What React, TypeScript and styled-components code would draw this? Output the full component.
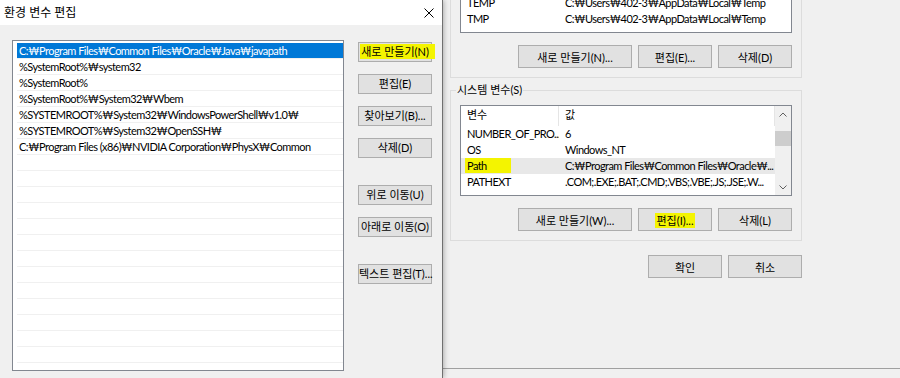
import React from 'react';
import styled, { createGlobalStyle } from 'styled-components';

const paths = [
  'C:₩Program Files₩Common Files₩Oracle₩Java₩javapath',
  '%SystemRoot%₩system32',
  '%SystemRoot%',
  '%SystemRoot%₩System32₩Wbem',
  '%SYSTEMROOT%₩System32₩WindowsPowerShell₩v1.0₩',
  '%SYSTEMROOT%₩System32₩OpenSSH₩',
  'C:₩Program Files (x86)₩NVIDIA Corporation₩PhysX₩Common',
];

const userVars = [
  { name: 'TEMP', value: 'C:₩Users₩402-3₩AppData₩Local₩Temp' },
  { name: 'TMP', value: 'C:₩Users₩402-3₩AppData₩Local₩Temp' },
];

const systemVars = [
  { name: 'NUMBER_OF_PRO...', value: '6' },
  { name: 'OS', value: 'Windows_NT' },
  { name: 'Path', value: 'C:₩Program Files₩Common Files₩Oracle₩...', marked: true },
  { name: 'PATHEXT', value: '.COM;.EXE;.BAT;.CMD;.VBS;.VBE;.JS;.JSE;.W...' },
];

const EMPTY_ROWS = 14;

const App = () => {
  return (
    <>
      <GlobalStyle />
      <Screen>
        <FrontDialog>
          <TitleBar>
            <span>환경 변수 편집</span>
            <svg width="10" height="10" viewBox="0 0 10 10">
              <path d="M0.5 0.5 L9.5 9.5 M9.5 0.5 L0.5 9.5" stroke="#000" strokeWidth="1" />
            </svg>
          </TitleBar>
          <DialogBody>
            <PathList>
              {paths.map((p, i) => (
                <PathRow key={p} $selected={i === 0}>{p}</PathRow>
              ))}
              {Array.from({ length: EMPTY_ROWS }).map((_, i) => (
                <PathRow key={'e' + i} />
              ))}
            </PathList>
            <ButtonColumn>
              <ButtonStack>
                <SideButton><Marker $left={1} $right={6}>새로 만들기(N)</Marker></SideButton>
                <SideButton>편집(E)</SideButton>
                <SideButton>찾아보기(B)...</SideButton>
                <SideButton>삭제(D)</SideButton>
              </ButtonStack>
              <ButtonStack>
                <SideButton>위로 이동(U)</SideButton>
                <SideButton>아래로 이동(O)</SideButton>
              </ButtonStack>
              <ButtonStack>
                <SideButton>텍스트 편집(T)...</SideButton>
              </ButtonStack>
            </ButtonColumn>
          </DialogBody>
        </FrontDialog>

        <BackDialog>
          <BackContent>
            <UserGroup>
              <UserList>
                {userVars.map((v) => (
                  <VarRow key={v.name}>
                    <NameCell>{v.name}</NameCell>
                    <ValueCell>{v.value}</ValueCell>
                  </VarRow>
                ))}
              </UserList>
              <ButtonRow>
                <BackButton $width={114}>새로 만들기(N)...</BackButton>
                <BackButton $width={74}>편집(E)...</BackButton>
                <BackButton $width={74}>삭제(D)</BackButton>
              </ButtonRow>
            </UserGroup>

            <SystemGroup>
              <GroupLegend>시스템 변수(S)</GroupLegend>
              <SystemList>
                <Table>
                  <HeaderRow>
                    <HeaderCell $width={98}>변수</HeaderCell>
                    <HeaderCell>값</HeaderCell>
                  </HeaderRow>
                  {systemVars.map((v) => (
                    <VarRow key={v.name} $active={v.marked}>
                      <NameCell>
                        {v.marked ? <Marker $left={2} $right={24}>{v.name}</Marker> : v.name}
                      </NameCell>
                      <ValueCell>{v.value}</ValueCell>
                    </VarRow>
                  ))}
                </Table>
                <ScrollBar>
                  <ScrollArrow>
                    <svg width="8" height="5" viewBox="0 0 8 5">
                      <polyline points="0.5,4.5 4,1 7.5,4.5" fill="none" stroke="#606060" strokeWidth="1" />
                    </svg>
                  </ScrollArrow>
                  <ScrollTrack>
                    <ScrollThumb $offset={9} />
                  </ScrollTrack>
                  <ScrollArrow>
                    <svg width="8" height="5" viewBox="0 0 8 5">
                      <polyline points="0.5,0.5 4,4 7.5,0.5" fill="none" stroke="#606060" strokeWidth="1" />
                    </svg>
                  </ScrollArrow>
                </ScrollBar>
              </SystemList>
              <ButtonRow>
                <BackButton $width={114}>새로 만들기(W)...</BackButton>
                <BackButton $width={74}><Marker $left={2} $right={2}>편집(I)...</Marker></BackButton>
                <BackButton $width={74}>삭제(L)</BackButton>
              </ButtonRow>
            </SystemGroup>

            <FooterRow>
              <BackButton $width={74}>확인</BackButton>
              <BackButton $width={74}>취소</BackButton>
            </FooterRow>
          </BackContent>
        </BackDialog>
      </Screen>
    </>
  );
};

const uiFont = `"Lato", "Noto Sans CJK KR", sans-serif`;

const listText = `
  font-size: 11px;
  letter-spacing: -0.55px;
`;

const GlobalStyle = createGlobalStyle`
  html, body {
    margin: 0;
    padding: 0;
  }
  body {
    background: #f0f0f0;
    font-family: ${uiFont};
    font-size: 11px;
    color: #000;
  }
  #root {
    width: 900px;
    height: 378px;
    overflow: hidden;
  }
`;

const Screen = styled.div`
  display: flex;
  width: 900px;
  height: 378px;
  overflow: hidden;
  background: #f0f0f0;
`;

const FrontDialog = styled.section`
  position: relative;
  z-index: 1;
  flex: none;
  width: 442px;
  display: flex;
  flex-direction: column;
  background: #f0f0f0;
  border-right: 1px solid #707070;
  box-shadow: 1px 0 5px rgba(0, 0, 0, 0.28);
`;

const TitleBar = styled.div`
  height: 25px;
  flex: none;
  display: flex;
  align-items: center;
  justify-content: space-between;
  padding: 0 8px 0 4px;
  background: #fff;
  font-size: 12px;
  line-height: 16px;

  svg {
    display: block;
  }
`;

const DialogBody = styled.div`
  flex: 1;
  display: flex;
  gap: 14px;
  padding: 15px 0 0 12px;
  min-height: 0;
`;

const PathList = styled.div`
  flex: none;
  box-sizing: border-box;
  width: 332px;
  height: 331px;
  padding: 2px 0 0 4px;
  background: #fff;
  border: 1px solid #828790;
  overflow: hidden;
  ${listText}
`;

const PathRow = styled.div<{ $selected?: boolean }>`
  box-sizing: border-box;
  height: 16px;
  padding-left: 2px;
  line-height: 15px;
  white-space: nowrap;
  border-bottom: 1px solid #f0f0f0;
  background: ${(p) => (p.$selected ? '#0078d7' : 'transparent')};
  color: ${(p) => (p.$selected ? '#fff' : '#000')};
`;

const ButtonColumn = styled.div`
  flex: none;
  width: 74px;
  display: flex;
  flex-direction: column;
  gap: 27px;
  padding-top: 2px;
`;

const ButtonStack = styled.div`
  display: flex;
  flex-direction: column;
  gap: 12px;
`;

const SideButton = styled.button`
  box-sizing: border-box;
  height: 20px;
  width: 74px;
  padding: 0;
  border: 1px solid #adadad;
  background: #e1e1e1;
  font: inherit;
  font-size: 11px;
  line-height: 18px;
  color: #000;
  white-space: nowrap;
  overflow: visible;
`;

const Marker = styled.span<{ $left: number; $right: number }>`
  background: #f4f400;
  padding: 1px ${(p) => p.$right}px 1px ${(p) => p.$left}px;
  margin-left: -${(p) => p.$left}px;
  margin-right: -${(p) => p.$right}px;
`;

const BackDialog = styled.section`
  flex: 1;
  box-sizing: border-box;
  height: 369px;
  padding-left: 7px;
  border-bottom: 1px solid #a0a0a0;
  background: #f0f0f0;
`;

const BackContent = styled.div`
  width: 352px;
  display: flex;
  flex-direction: column;
`;

const UserGroup = styled.div`
  border: 1px solid #dcdcdc;
  border-top: none;
  padding: 0 9px 9px 9px;
`;

const UserList = styled.div`
  box-sizing: border-box;
  height: 33px;
  display: flex;
  flex-direction: column;
  justify-content: flex-end;
  padding-bottom: 5px;
  background: #fff;
  border: 1px solid #828790;
  border-top: none;
  overflow: hidden;
  ${listText}
`;

const VarRow = styled.div<{ $active?: boolean }>`
  flex: none;
  display: flex;
  height: 16px;
  line-height: 16px;
  white-space: nowrap;
  background: ${(p) => (p.$active ? '#e8e8e8' : 'transparent')};
`;

const NameCell = styled.div`
  flex: none;
  box-sizing: border-box;
  width: 98px;
  padding-left: 6px;
  overflow: hidden;
`;

const ValueCell = styled.div`
  flex: 1;
  padding-left: 6px;
  overflow: hidden;
`;

const ButtonRow = styled.div`
  display: flex;
  justify-content: flex-end;
  gap: 6px;
  margin-top: 12px;
`;

const BackButton = styled.button<{ $width: number }>`
  box-sizing: border-box;
  width: ${(p) => p.$width}px;
  height: 23px;
  padding: 0;
  border: 1px solid #adadad;
  background: #e1e1e1;
  font: inherit;
  font-size: 11px;
  color: #000;
  white-space: nowrap;
`;

const SystemGroup = styled.fieldset`
  margin: 4px 0 0 0;
  min-width: 0;
  padding: 0 9px 9px 9px;
  border: 1px solid #dcdcdc;
`;

const GroupLegend = styled.legend`
  margin-left: -4px;
  padding: 0 1px;
  line-height: 16px;
  font-size: 11px;
`;

const SystemList = styled.div`
  box-sizing: border-box;
  height: 91px;
  margin-top: 7px;
  display: flex;
  background: #fff;
  border: 1px solid #828790;
  overflow: hidden;
  ${listText}
`;

const Table = styled.div`
  flex: 1;
  min-width: 0;
  display: flex;
  flex-direction: column;
`;

const HeaderRow = styled.div`
  flex: none;
  display: flex;
  height: 20px;
  line-height: 18px;
  letter-spacing: 0;
`;

const HeaderCell = styled.div<{ $width?: number }>`
  box-sizing: border-box;
  ${(p) => (p.$width ? `width: ${p.$width}px; flex: none;` : 'flex: 1;')}
  padding-left: 6px;
  border-right: 1px solid #e5e5e5;
`;

const ScrollBar = styled.div`
  flex: none;
  width: 16px;
  display: flex;
  flex-direction: column;
  background: #f0f0f0;
`;

const ScrollArrow = styled.div`
  height: 16px;
  flex: none;
  display: flex;
  align-items: center;
  justify-content: center;

  svg {
    display: block;
  }
`;

const ScrollTrack = styled.div`
  flex: 1;
`;

const ScrollThumb = styled.div<{ $offset: number }>`
  margin-top: ${(p) => p.$offset}px;
  height: 15px;
  background: #cdcdcd;
`;

const FooterRow = styled.div`
  display: flex;
  justify-content: flex-end;
  gap: 6px;
  margin-top: 14px;
`;

export default App;
